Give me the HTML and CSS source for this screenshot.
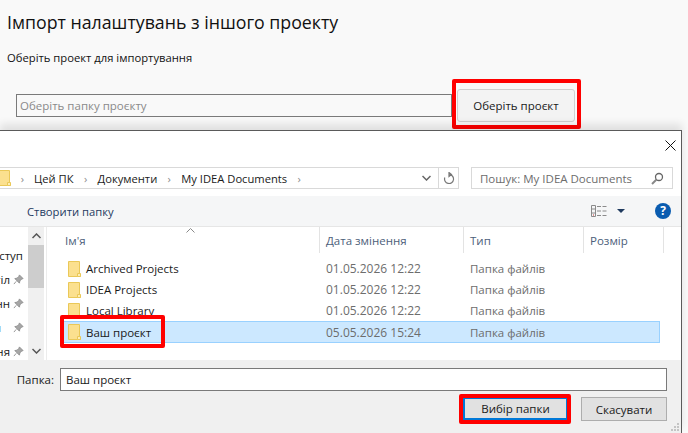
FILE: index.html
```html
<!DOCTYPE html>
<html lang="uk">
<head>
<meta charset="UTF-8">
<title>Імпорт налаштувань</title>
<link rel="stylesheet" href="styles.css">
</head>
<body>
<svg class="defs">
    <symbol id="folder" viewBox="0 0 13 16">
        <path d="M.5.5h11v12.5h1v2.500H.5z" fill="#fbe08f" stroke="#eac858"/>
        <path d="M9.500 12.500h3v3h-3z" fill="#fdeeb8" stroke="#eac858"/>
    </symbol>
    <symbol id="pin" viewBox="0 0 12 12">
        <path d="M7 1l4 4-1.500.5-2 2-.5 2.500-5-5 2.500-.5 2-2zM3.500 8L1 11" fill="#a6a6a6" stroke="#8f8f8f"/>
    </symbol>
</svg>

<div class="page">
    <h1 class="title">Імпорт налаштувань з іншого проекту</h1>
    <p class="hint">Оберіть проект для імпортування</p>
    <div class="picker">
        <div class="path">Оберіть папку проєкту</div>
        <div class="red-box">
            <button class="pick-btn">Оберіть проєкт</button>
        </div>
    </div>
</div>

<div class="dialog">
    <div class="close-row">
        <svg width="11" height="11" viewBox="0 0 11 11"><path d="M.5.5l10 10M10.500.5l-10 10" stroke="#111" fill="none"/></svg>
    </div>

    <div class="nav-row">
        <div class="crumbs">
            <svg class="crumb-folder" width="13" height="16"><use href="#folder"/></svg>
            <span class="sep">›</span><span>Цей ПК</span>
            <span class="sep">›</span><span>Документи</span>
            <span class="sep">›</span><span>My IDEA Documents</span>
            <span class="sep">›</span>
            <span class="crumb-drop">
                <svg width="9" height="6" viewBox="0 0 9 6"><path d="M.5 1l4 4 4-4" stroke="#666" stroke-width="1.500" fill="none"/></svg>
            </span>
            <span class="crumb-refresh">
                <svg width="12" height="13" viewBox="0 0 12 13"><path d="M6 2.500a4.500 4.500 0 1 1-4.200 3M6 .5v4l2.500-2z" stroke="#777" stroke-width="1.200" fill="none"/></svg>
            </span>
        </div>
        <div class="search">
            <span>Пошук: My IDEA Documents</span>
            <svg width="13" height="13" viewBox="0 0 13 13"><circle cx="8" cy="5" r="3.500" stroke="#666" stroke-width="1.300" fill="none"/><path d="M5.500 7.500L1 12" stroke="#888" stroke-width="2"/></svg>
        </div>
    </div>

    <div class="toolbar">
        <span class="new-folder">Створити папку</span>
        <div class="tools">
            <svg width="16" height="12" viewBox="0 0 16 12"><path d="M.5.500h4v11h-4zM.5 4h4M.5 8h4M6 1.500h4M6 6h4M6 10.500h4M11.500 1.500h4M11.500 6h4M11.500 10.500h4" stroke="#8a8a8a" fill="none"/><path d="M2 9.500h1v1H2z" fill="#c33"/></svg>
            <svg class="view-drop" width="8" height="4" viewBox="0 0 8 4"><path d="M0 0h8L4 4z" fill="#1f3a5f"/></svg>
            <span class="help">?</span>
        </div>
    </div>

    <div class="main">
        <div class="side">
            <div class="side-items">
                <div class="side-item"><span class="side-text">Швидкий доступ</span></div>
                <div class="side-item"><span class="side-text">Робочий стіл</span><svg class="pin" width="11" height="11"><use href="#pin"/></svg></div>
                <div class="side-item"><span class="side-text">Завантаженн</span><svg class="pin" width="11" height="11"><use href="#pin"/></svg></div>
                <div class="side-item short"><span class="side-text">Документи</span><svg class="pin" width="11" height="11"><use href="#pin"/></svg></div>
                <div class="side-item"><span class="side-text">Зображення</span><svg class="pin" width="11" height="11"><use href="#pin"/></svg></div>
            </div>
            <div class="scrollbar">
                <svg class="arrow" width="9" height="6" viewBox="0 0 9 6"><path d="M.5 5l4-4 4 4" stroke="#555" stroke-width="1.500" fill="none"/></svg>
                <div class="thumb"></div>
                <svg class="arrow" width="9" height="6" viewBox="0 0 9 6"><path d="M.5 1l4 4 4-4" stroke="#555" stroke-width="1.500" fill="none"/></svg>
            </div>
        </div>

        <div class="files">
            <div class="head">
                <div class="col col-name">Ім'я
                    <svg class="sort" width="9" height="5" viewBox="0 0 9 5"><path d="M.5 4.500l4-4 4 4" stroke="#888" fill="none"/></svg>
                </div>
                <div class="col col-date">Дата змінення</div>
                <div class="col col-type">Тип</div>
                <div class="col col-size">Розмір</div>
            </div>
            <div class="row">
                <span class="name"><svg width="13" height="16"><use href="#folder"/></svg>Archived Projects</span>
                <span class="date">01.05.2026 12:22</span><span>Папка файлів</span>
            </div>
            <div class="row">
                <span class="name"><svg width="13" height="16"><use href="#folder"/></svg>IDEA Projects</span>
                <span class="date">01.05.2026 12:22</span><span>Папка файлів</span>
            </div>
            <div class="row">
                <span class="name"><svg width="13" height="16"><use href="#folder"/></svg>Local Library</span>
                <span class="date">01.05.2026 12:22</span><span>Папка файлів</span>
            </div>
            <div class="row selected">
                <span class="name"><svg width="13" height="16"><use href="#folder"/></svg>Ваш проєкт</span>
                <span class="date">05.05.2026 15:24</span><span>Папка файлів</span>
            </div>
            <div class="row-mark"></div>
        </div>
    </div>

    <div class="footer">
        <div class="folder-row">
            <label class="folder-label">Папка:</label>
            <div class="folder-input">Ваш проєкт</div>
        </div>
        <div class="actions">
            <div class="red-box small">
                <button class="win-btn primary">Вибір папки</button>
            </div>
            <button class="win-btn">Скасувати</button>
        </div>
        <svg class="grip" width="10" height="10" viewBox="0 0 10 10"><path d="M7 1h2v2H7zM4 4h2v2H4zM7 4h2v2H7zM1 7h2v2H1zM4 7h2v2H4zM7 7h2v2H7z" fill="#c4c4c4"/></svg>
    </div>
</div>
</body>
</html>
```

FILE: styles.css
```css
* {
    box-sizing: border-box;
}
html, body {
    margin: 0;
    height: 433px;
    overflow: hidden;
}
body {
    position: relative;
    background: #f9f9f9;
    font-family: "Open Sans", "Noto Sans", sans-serif;
    font-size: 11.500px;
    color: #1a1a1a;
}
button {
    font-family: inherit;
    font-size: 11.500px;
    color: #1a1a1a;
}
.defs {
    position: absolute;
    width: 0;
    height: 0;
}

/* page behind the dialog */
.page {
    padding: 10px 0 0 7px;
}
.title {
    margin: 0;
    font-size: 17.750px;
    font-weight: 400;
    line-height: 24px;
    color: #111;
}
.hint {
    margin: 16px 0 0;
    font-size: 11.250px;
    line-height: 16px;
    color: #111;
}
.picker {
    display: flex;
    align-items: flex-start;
    margin: 13px 0 0 9px;
}
.path {
    width: 436px;
    height: 23px;
    margin-top: 15px;
    padding-left: 3px;
    border: 1px solid #7a7a7a;
    line-height: 21px;
    color: #8a8a8a;
}
.red-box {
    border: 4px solid #f00;
    border-radius: 2px;
}
.picker .red-box {
    width: 129px;
    height: 50px;
    padding: 6px 0 0 1px;
}
.pick-btn {
    display: block;
    width: 118px;
    height: 33px;
    padding: 0;
    border: 1px solid #d0d0d0;
    border-radius: 3px;
    background: #f3f3f3;
}

/* file dialog */
.dialog {
    position: absolute;
    left: 0;
    top: 130px;
    width: 682px;
    height: 303px;
    display: flex;
    flex-direction: column;
    background: #fff;
    border: 1px solid #5a5a5a;
    border-width: 1px 1px 0 0;
    box-shadow: 0 -6px 8px rgba(0, 0, 0, .1);
}
.close-row {
    display: flex;
    justify-content: flex-end;
    height: 36px;
    padding: 9px 5px 0 0;
}
.nav-row {
    display: flex;
    justify-content: space-between;
    height: 29px;
    padding-right: 8px;
    background: #fff;
}
.crumbs {
    display: flex;
    align-items: center;
    width: 459px;
    height: 22px;
    border: 1px solid #d9d9d9;
    border-left: 0;
    font-size: 11.200px;
    white-space: nowrap;
}
.crumb-folder {
    margin-left: -2px;
    width: 13px;
}
.sep {
    width: 24px;
    text-align: center;
    font-size: 11px;
    color: #8a8a8a;
}
.crumb-folder + .sep {
    width: 23px;
}
.crumb-drop {
    display: flex;
    align-items: center;
    margin-left: auto;
    padding-right: 7px;
}
.crumb-refresh {
    display: flex;
    align-items: center;
    justify-content: center;
    width: 20px;
    height: 100%;
    border-left: 1px solid #d9d9d9;
}
.search {
    display: flex;
    align-items: center;
    justify-content: space-between;
    width: 202px;
    height: 22px;
    padding: 0 8px 0 8px;
    border: 1px solid #d9d9d9;
    color: #6d6d6d;
}
.toolbar {
    display: flex;
    align-items: center;
    justify-content: space-between;
    height: 31px;
    padding: 0 10px 0 27px;
    background: #f5f6f7;
    border-bottom: 1px solid #e6e6e6;
}
.new-folder {
    color: #1f3a5f;
    font-size: 11.250px;
}
.tools {
    display: flex;
    align-items: center;
}
.view-drop {
    margin-left: 10px;
}
.help {
    width: 16px;
    height: 16px;
    margin-left: 30px;
    border-radius: 50%;
    background: #0a5cb0;
    color: #fff;
    font-size: 12px;
    font-weight: 700;
    line-height: 16px;
    text-align: center;
}
.main {
    display: flex;
    height: 133px;
}
.side {
    display: flex;
    flex: none;
    width: 47px;
    border-right: 1px solid #ececec;
}
.side-items {
    width: 28px;
    padding-top: 16px;
    overflow: hidden;
}
.side-item {
    display: flex;
    align-items: center;
    justify-content: flex-end;
    height: 24px;
    white-space: nowrap;
}
.side-text {
    flex: none;
}
.pin {
    flex: none;
    margin-left: 3px;
    margin-right: 4px;
}
.side-item:first-child {
    padding-right: 5px;
}
.short .pin {
    margin-left: 12px;
}
.scrollbar {
    display: flex;
    flex-direction: column;
    align-items: center;
    width: 16px;
    background: #f0f0f0;
}
.arrow {
    flex: none;
    margin: 6px 0;
}
.thumb {
    flex: none;
    width: 100%;
    height: 43px;
    margin-bottom: auto;
    background: #cdcdcd;
}
.files {
    position: relative;
    flex: 1;
    padding-left: 15px;
}
.head {
    display: flex;
    height: 26px;
    margin-left: -15px;
    color: #4c607a;
}
.col {
    position: relative;
    height: 26px;
    line-height: 27px;
    border-right: 1px solid #e3e3e3;
}
.col-name {
    width: 273px;
    padding-left: 18px;
}
.col-date {
    width: 144px;
    padding-left: 6px;
}
.col-type {
    width: 120px;
    padding-left: 6px;
}
.col-size {
    width: 80px;
    padding-left: 6px;
}
.sort {
    position: absolute;
    left: 139px;
    top: 1px;
}
.row {
    display: grid;
    grid-template-columns: 264px 144px 1fr;
    align-items: center;
    width: 598px;
    height: 21px;
    color: #6d6d6d;
}
.head + .row {
    margin-top: 5px;
}
.date {
    font-size: 12px;
}
.name {
    display: flex;
    align-items: center;
    gap: 5px;
    padding-left: 6px;
    color: #1a1a1a;
}
.selected {
    height: 22px;
    grid-template-columns: 263px 144px 1fr;
    background: #cce8ff;
    border: 1px solid #99d1ff;
}
.selected .name {
    padding-left: 5px;
}
.row-mark {
    position: absolute;
    left: 13px;
    top: 88px;
    width: 105px;
    height: 33px;
    border: 4px solid #f00;
    border-radius: 2px;
}
.footer {
    position: relative;
    flex: 1;
    padding-top: 8px;
    background: #f0f0f0;
}
.folder-row {
    display: flex;
    align-items: center;
}
.folder-label {
    width: 60px;
    padding-right: 6px;
    text-align: right;
}
.folder-input {
    width: 607px;
    height: 23px;
    padding-left: 5px;
    border: 1px solid #7a7a7a;
    background: #fff;
    line-height: 21px;
}
.actions {
    display: flex;
    align-items: center;
    margin: 3px 0 0 459px;
}
.red-box.small {
    flex: none;
    width: 112px;
    height: 30px;
    padding: 0;
}
.win-btn {
    display: block;
    width: 86px;
    height: 24px;
    padding: 0;
    border: 1px solid #adadad;
    background: #e1e1e1;
}
.primary {
    width: 104px;
    height: 22px;
    border: 1px solid #0078d7;
    border-width: 1px 1px 2px 2px;
}
.actions > .win-btn {
    margin-left: 10px;
}
.grip {
    position: absolute;
    right: 1px;
    bottom: 1px;
}
```
